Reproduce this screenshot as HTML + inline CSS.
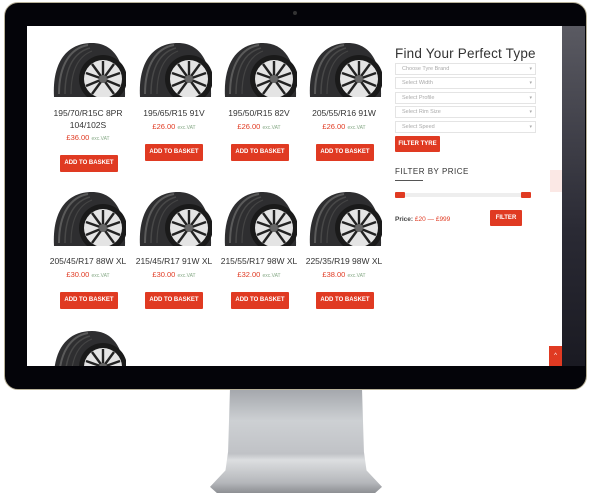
<!DOCTYPE html>
<html><head><meta charset="utf-8"><style>
*{margin:0;padding:0;box-sizing:border-box}
body{width:590px;height:498px;background:#fff;position:relative;overflow:hidden;font-family:"Liberation Sans",sans-serif}
.bez{position:absolute;left:4px;top:2px;width:583px;height:388px;background:#040409;border-radius:14px;border:1px solid #b9b29a}
.side{position:absolute;left:562px;top:26px;width:23px;height:340px;background:linear-gradient(180deg,#5a5a62,#2a2a34 60%,#1a1a22)}
.scr{position:absolute;left:27px;top:26px;width:535px;height:340px;background:#fff;overflow:hidden}
.cam{position:absolute;left:293px;top:11px;width:4px;height:4px;border-radius:50%;background:#333}
.stand{position:absolute;left:210px;top:390px;width:172px;height:103px;background:linear-gradient(180deg,#a5a8ad,#cdd0d3 30%,#c0c2c6 62%,#dcdee0 68%,#b5b7bb 90%,#8d8f93);clip-path:polygon(11.6% 0,88.4% 0,89.5% 60%,91% 78%,100% 94%,96% 100%,4% 100%,0 94%,9% 78%,10.5% 60%)}
.tyre{position:absolute;width:74px;height:55px}
.t{position:absolute;width:86px;text-align:center;font-size:8.5px;color:#333;line-height:12px}
.p{position:absolute;width:86px;text-align:center;font-size:7.5px;color:#e03a22}
.p small{font-size:5px;color:#8a8}
.b{position:absolute;width:58px;height:17px;background:#e03a22;color:#fff;font-size:6px;font-weight:bold;text-align:center;line-height:17px;border-radius:1px}
.h{position:absolute;left:368px;top:20px;font-size:13.5px;color:#333;letter-spacing:.2px}
.sel{position:absolute;left:368px;width:141px;height:12px;border:1px solid #e4e4e4;font-size:5.5px;color:#aaa;padding-left:6px;line-height:11px}
.sel:after{content:"▾";position:absolute;right:3px;font-size:5px}
</style></head><body>
<svg width="0" height="0" style="position:absolute"><defs>
<g id="ty"><path d="M2 55 C0 20 15 1 40 1 C62 1 74 20 73 55 Z" fill="#2e2e30"/>
<path d="M7 52 C7 22 19 6 36 3" stroke="#5a5a5a" stroke-width="2" fill="none"/>
<path d="M13 52 C13 24 23 10 38 6" stroke="#484848" stroke-width="1.5" fill="none"/>
<path d="M19 52 C19 27 27 14 40 9" stroke="#444" stroke-width="1.2" fill="none"/>
<circle cx="51" cy="37" r="24" fill="#1a1a1a"/><circle cx="51" cy="37" r="19" fill="#e4e4e4"/>
<g stroke="#222" stroke-width="2.4"><line x1="51" y1="37" x2="51" y2="19"/><line x1="51" y1="37" x2="40" y2="22"/><line x1="51" y1="37" x2="62" y2="22"/><line x1="51" y1="37" x2="34" y2="31"/><line x1="51" y1="37" x2="68" y2="31"/><line x1="51" y1="37" x2="34" y2="44"/><line x1="51" y1="37" x2="68" y2="44"/><line x1="51" y1="37" x2="40" y2="52"/><line x1="51" y1="37" x2="62" y2="52"/></g>
<circle cx="51" cy="37" r="4" fill="#666"/>
<rect x="0" y="55" width="74" height="10" fill="#fff"/></g></defs></svg>
<div class="bez"></div><div class="cam"></div><div class="side"></div>
<div class="stand"></div>
<div class="scr">
<svg class="tyre" style="left:25px;top:16px" viewBox="0 0 74 55"><use href="#ty"/></svg>
<svg class="tyre" style="left:111px;top:16px" viewBox="0 0 74 55"><use href="#ty"/></svg>
<svg class="tyre" style="left:196px;top:16px" viewBox="0 0 74 55"><use href="#ty"/></svg>
<svg class="tyre" style="left:281px;top:16px" viewBox="0 0 74 55"><use href="#ty"/></svg>
<svg class="tyre" style="left:25px;top:165px" viewBox="0 0 74 55"><use href="#ty"/></svg>
<svg class="tyre" style="left:111px;top:165px" viewBox="0 0 74 55"><use href="#ty"/></svg>
<svg class="tyre" style="left:196px;top:165px" viewBox="0 0 74 55"><use href="#ty"/></svg>
<svg class="tyre" style="left:281px;top:165px" viewBox="0 0 74 55"><use href="#ty"/></svg>
<svg class="tyre" style="left:25px;top:304px" viewBox="0 0 74 55"><use href="#ty"/></svg>

<div class="t" style="left:18px;top:81px">195/70/R15C 8PR<br>104/102S</div>
<div class="p" style="left:18px;top:107px">£36.00 <small>exc.VAT</small></div>
<div class="b" style="left:33px;top:129px">ADD TO BASKET</div>
<div class="t" style="left:104px;top:81px">195/65/R15 91V</div>
<div class="p" style="left:104px;top:96px">£26.00 <small>exc.VAT</small></div>
<div class="b" style="left:118px;top:118px">ADD TO BASKET</div>
<div class="t" style="left:189px;top:81px">195/50/R15 82V</div>
<div class="p" style="left:189px;top:96px">£26.00 <small>exc.VAT</small></div>
<div class="b" style="left:204px;top:118px">ADD TO BASKET</div>
<div class="t" style="left:274px;top:81px">205/55/R16 91W</div>
<div class="p" style="left:274px;top:96px">£26.00 <small>exc.VAT</small></div>
<div class="b" style="left:289px;top:118px">ADD TO BASKET</div>

<div class="t" style="left:18px;top:229px">205/45/R17 88W XL</div>
<div class="p" style="left:18px;top:244px">£30.00 <small>exc.VAT</small></div>
<div class="b" style="left:33px;top:266px">ADD TO BASKET</div>
<div class="t" style="left:104px;top:229px">215/45/R17 91W XL</div>
<div class="p" style="left:104px;top:244px">£30.00 <small>exc.VAT</small></div>
<div class="b" style="left:118px;top:266px">ADD TO BASKET</div>
<div class="t" style="left:189px;top:229px">215/55/R17 98W XL</div>
<div class="p" style="left:189px;top:244px">£32.00 <small>exc.VAT</small></div>
<div class="b" style="left:204px;top:266px">ADD TO BASKET</div>
<div class="t" style="left:274px;top:229px">225/35/R19 98W XL</div>
<div class="p" style="left:274px;top:244px">£38.00 <small>exc.VAT</small></div>
<div class="b" style="left:289px;top:266px">ADD TO BASKET</div>

<div class="h">Find Your Perfect Type</div>
<div class="sel" style="top:37px">Choose Tyre Brand</div>
<div class="sel" style="top:51px">Select Width</div>
<div class="sel" style="top:66px">Select Profile</div>
<div class="sel" style="top:80px">Select Rim Size</div>
<div class="sel" style="top:95px">Select Speed</div>
<div class="b" style="left:368px;top:110px;width:45px;height:16px;line-height:16px">FILTER TYRE</div>
<div style="position:absolute;left:368px;top:141px;font-size:8px;color:#333;letter-spacing:.5px">FILTER BY PRICE</div>
<div style="position:absolute;left:368px;top:154px;width:28px;height:1px;background:#555"></div>
<div style="position:absolute;left:372px;top:167px;width:130px;height:4px;background:#eee"></div>
<div style="position:absolute;left:368px;top:166px;width:10px;height:6px;background:#e03a22;border-radius:1px"></div>
<div style="position:absolute;left:494px;top:166px;width:10px;height:6px;background:#e03a22;border-radius:1px"></div>
<div style="position:absolute;left:368px;top:190px;font-size:6.5px;font-weight:bold;color:#444">Price: <span style="color:#e03a22;font-weight:normal">£20 — £999</span></div>
<div class="b" style="left:463px;top:184px;width:32px;height:16px;line-height:16px">FILTER</div>
<div style="position:absolute;left:523px;top:144px;width:12px;height:22px;background:#fbe8e5"></div>
<div style="position:absolute;left:522px;top:320px;width:13px;height:20px;background:#e03a22;color:#fff;font-size:6px;text-align:center;line-height:20px">^</div>
</div>
</body></html>
